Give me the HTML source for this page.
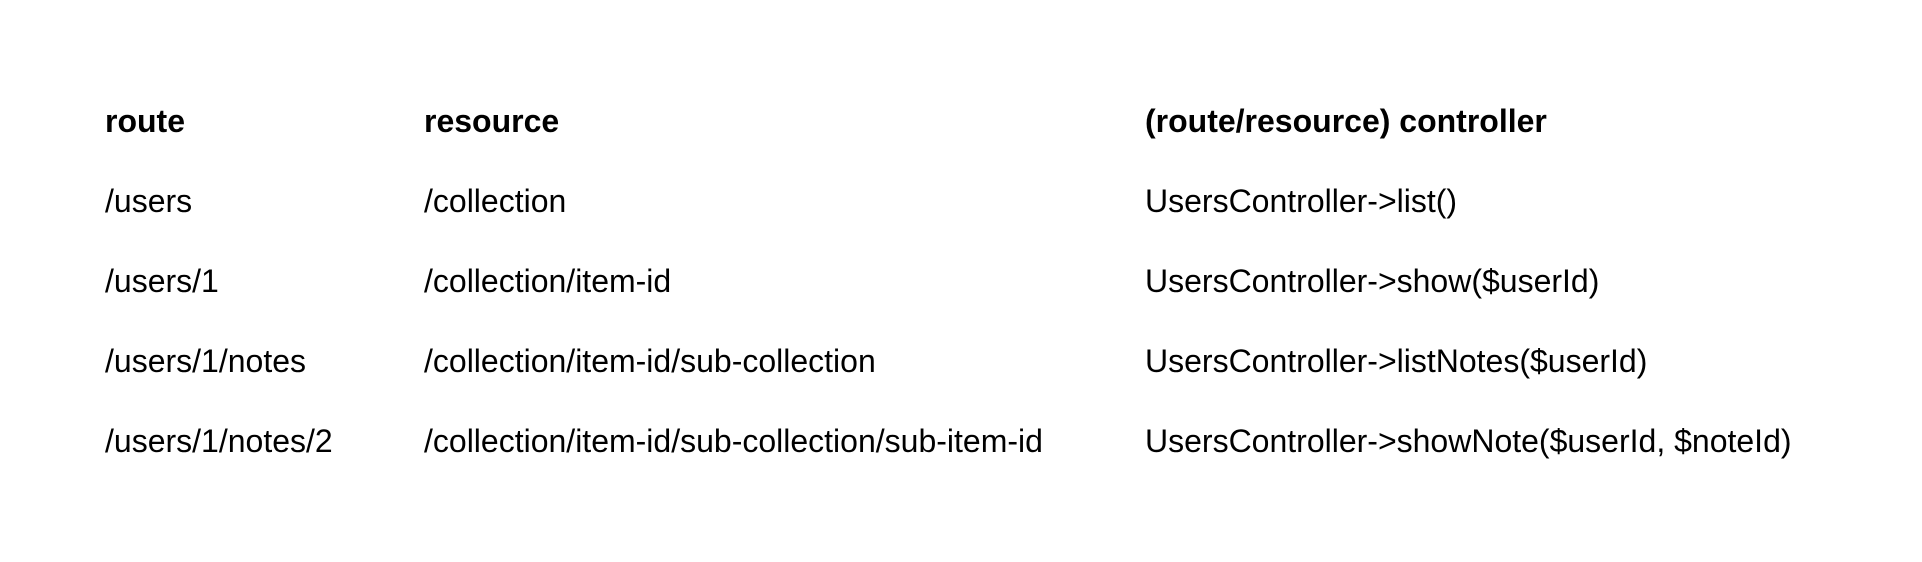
<!DOCTYPE html>
<html><head><meta charset="utf-8"><style>
html,body{margin:0;padding:0;background:#fff;width:1922px;height:562px;overflow:hidden}
.t{position:absolute;font-family:"Liberation Sans",Arial,sans-serif;font-size:32px;line-height:32px;color:#000;white-space:nowrap}
.b{font-weight:bold}
</style></head><body>
<div class="t b" style="left:105px;top:105px">route</div>
<div class="t b" style="left:424px;top:105px">resource</div>
<div class="t b" style="left:1145px;top:105px">(route/resource) controller</div>

<div class="t" style="left:105px;top:185px">/users</div>
<div class="t" style="left:424px;top:185px">/collection</div>
<div class="t" style="left:1145px;top:185px">UsersController-&gt;list()</div>

<div class="t" style="left:105px;top:265px">/users/1</div>
<div class="t" style="left:424px;top:265px">/collection/item-id</div>
<div class="t" style="left:1145px;top:265px">UsersController-&gt;show($userId)</div>

<div class="t" style="left:105px;top:345px">/users/1/notes</div>
<div class="t" style="left:424px;top:345px">/collection/item-id/sub-collection</div>
<div class="t" style="left:1145px;top:345px">UsersController-&gt;listNotes($userId)</div>

<div class="t" style="left:105px;top:425px">/users/1/notes/2</div>
<div class="t" style="left:424px;top:425px">/collection/item-id/sub-collection/sub-item-id</div>
<div class="t" style="left:1145px;top:425px">UsersController-&gt;showNote($userId, $noteId)</div>
</body></html>
